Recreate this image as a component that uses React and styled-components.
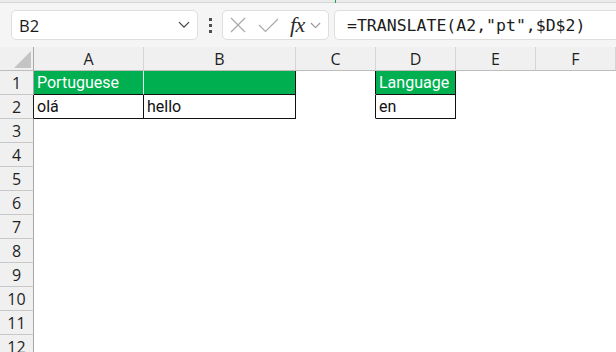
import styled, { createGlobalStyle } from "styled-components";

const Global = createGlobalStyle`
  html, body {
    margin: 0;
    padding: 0;
    background: #ffffff;
  }
  body {
    width: 616px;
    height: 352px;
    overflow: hidden;
  }
`;

const Page = styled.div`
  width: 616px;
  height: 352px;
  overflow: hidden;
  background: #ffffff;
`;

const TopStrip = styled.div`
  height: 3px;
  background: #ebebeb;
  border-bottom: 1px solid #d6d6d6;
  box-sizing: border-box;
  position: relative;
`;

const Tick = styled.span`
  position: absolute;
  left: 335px;
  top: 0;
  width: 1px;
  height: 3px;
  background: #22a050;
`;

const FormulaBar = styled.div`
  display: flex;
  align-items: center;
  height: 44px;
  padding-left: 11px;
  background: #f5f5f5;
  box-sizing: border-box;
`;

const Box = styled.div`
  display: flex;
  align-items: center;
  height: 30px;
  box-sizing: border-box;
  background: #ffffff;
  border: 1px solid #dedede;
  border-radius: 5px;
  width: ${(p) => p.$w || "auto"};
  flex: ${(p) => (p.$grow ? 1 : "none")};
  margin-right: ${(p) => p.$mr || "0"};
  ${(p) => p.$open && "border-right: none; border-radius: 5px 0 0 5px;"}
`;

const NameText = styled.span`
  flex: 1;
  padding-left: 7px;
  font-family: "Open Sans", "Noto Sans", sans-serif;
  font-size: 16.5px;
  color: #1b1b1b;
`;

const FormulaText = styled.span`
  padding-left: 12px;
  font-family: "DejaVu Sans Mono", "Liberation Mono", monospace;
  font-size: 16.5px;
  color: #1b1b1b;
`;

const Dots = styled.div`
  display: flex;
  flex-direction: column;
  gap: 3px;
  width: 3px;
  margin: 0 10px 0 11px;
  span {
    width: 3px;
    height: 3px;
    background: #505050;
  }
`;

const Fx = styled.span`
  font-family: "Liberation Serif", "DejaVu Serif", serif;
  font-style: italic;
  font-size: 22px;
  color: #2b2b2b;
  margin-left: 11px;
  line-height: 1;
  letter-spacing: -0.5px;
`;

const IconSlot = styled.span`
  display: inline-flex;
  margin-left: ${(p) => p.$ml || "0"};
  margin-right: ${(p) => p.$mr || "0"};
`;

const Sheet = styled.div`
  display: grid;
  grid-template-columns: 34px 110px 152px 80px 80px 80px 80px;
  grid-auto-rows: 24px;
`;

const ColHead = styled.div`
  box-sizing: border-box;
  background: #f0f0f0;
  border-right: 1px solid #d5d5d5;
  border-bottom: 1px solid #bdbdbd;
  display: flex;
  align-items: center;
  justify-content: center;
  font-family: "Open Sans", "Noto Sans", sans-serif;
  font-size: 16px;
  color: #1f1f1f;
  padding-top: 1px;
`;

const Corner = styled(ColHead)`
  border-right: 1px solid #a8a8a8;
  align-items: flex-end;
  justify-content: flex-end;
  padding: 0 2px 2px 0;
`;

const RowHead = styled.div`
  box-sizing: border-box;
  background: #f0f0f0;
  border-right: 1px solid ${(p) => (p.$dark ? "#1a1a1a" : "#a8a8a8")};
  border-bottom: 1px solid #c8c8c8;
  display: flex;
  align-items: center;
  justify-content: center;
  font-family: "Open Sans", "Noto Sans", sans-serif;
  font-size: 16px;
  color: #1f1f1f;
  padding-top: 1px;
`;

const Cell = styled.div`
  box-sizing: border-box;
  background: ${(p) => (p.$fill ? "#00b050" : "#ffffff")};
  color: ${(p) => (p.$fill ? "#ffffff" : "#111111")};
  border-right: 1px solid ${(p) => p.$right || "transparent"};
  border-bottom: 1px solid ${(p) => p.$bottom || "transparent"};
  font-family: Roboto, "Noto Sans", sans-serif;
  font-size: 16px;
  display: flex;
  align-items: flex-end;
  padding: 0 0 2px 3px;
  white-space: nowrap;
  overflow: hidden;
`;

const BLACK = "#111111";

const Chevron = ({ color = "#444", size = 12 }) => (
  <svg width={size} height={size * 0.6} viewBox="0 0 12 7" fill="none">
    <path d="M1 1l5 5 5-5" stroke={color} strokeWidth="1.3" />
  </svg>
);

const rows = [3, 4, 5, 6, 7, 8, 9, 10, 11, 12];
const blanks = [0, 1, 2, 3, 4, 5];

export default function App() {
  return (
    <Page>
      <Global />
      <TopStrip>
        <Tick />
      </TopStrip>
      <FormulaBar>
        <Box $w="187px">
          <NameText>B2</NameText>
          <IconSlot $mr="7px">
            <Chevron />
          </IconSlot>
        </Box>
        <Dots>
          <span />
          <span />
          <span />
        </Dots>
        <Box $w="107px" $mr="5px">
          <IconSlot $ml="7px">
            <svg width="16" height="16" viewBox="0 0 16 16">
              <path d="M1 1l14 14M15 1L1 15" stroke="#a9a9a9" strokeWidth="1.2" />
            </svg>
          </IconSlot>
          <IconSlot $ml="12px">
            <svg width="21" height="16" viewBox="0 0 21 16">
              <path d="M1 8l6.5 6.5L20 2" stroke="#a9a9a9" strokeWidth="1.2" fill="none" />
            </svg>
          </IconSlot>
          <Fx>fx</Fx>
          <IconSlot $ml="5px">
            <Chevron color="#9a9a9a" size={11} />
          </IconSlot>
        </Box>
        <Box $grow $open>
          <FormulaText>=TRANSLATE(A2,"pt",$D$2)</FormulaText>
        </Box>
      </FormulaBar>
      <Sheet>
        <Corner>
          <svg width="17" height="17" viewBox="0 0 17 17">
            <path d="M17 0V17H0Z" fill="#c4c4c4" />
          </svg>
        </Corner>
        {["A", "B", "C", "D", "E", "F"].map((c) => (
          <ColHead key={c}>{c}</ColHead>
        ))}

        <RowHead>1</RowHead>
        <Cell $fill $right="#e8f6ee" $bottom={BLACK}>Portuguese</Cell>
        <Cell $fill $right={BLACK} $bottom={BLACK} />
        <Cell $right={BLACK} />
        <Cell $fill $right={BLACK} $bottom={BLACK}>Language</Cell>
        <Cell />
        <Cell />

        <RowHead $dark>2</RowHead>
        <Cell $right={BLACK} $bottom={BLACK}>olá</Cell>
        <Cell $right={BLACK} $bottom={BLACK}>hello</Cell>
        <Cell $right={BLACK} />
        <Cell $right={BLACK} $bottom={BLACK}>en</Cell>
        <Cell />
        <Cell />

        {rows.flatMap((r) => [
          <RowHead key={`h${r}`}>{r}</RowHead>,
          ...blanks.map((b) => <Cell key={`c${r}-${b}`} />),
        ])}
      </Sheet>
    </Page>
  );
}
